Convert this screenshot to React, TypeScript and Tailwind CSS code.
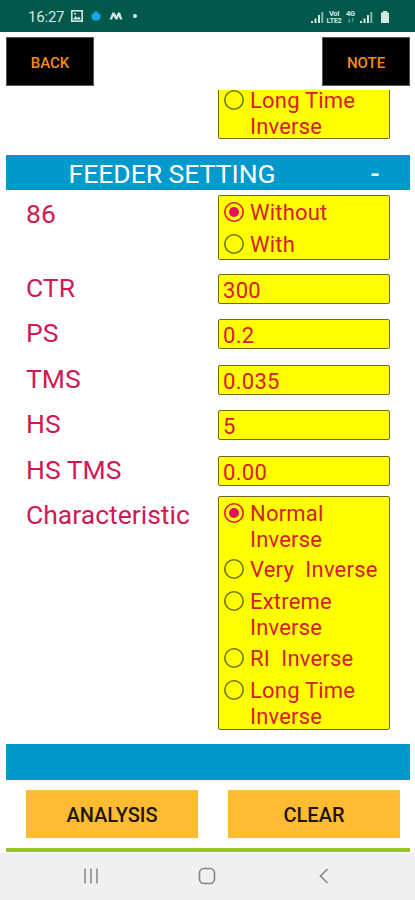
type Option = { lines: string[]; checked?: boolean };

const fields = [
  { label: "CTR", value: "300" },
  { label: "PS", value: "0.2" },
  { label: "TMS", value: "0.035" },
  { label: "HS", value: "5" },
  { label: "HS TMS", value: "0.00" },
];

const characteristics: Option[] = [
  { lines: ["Normal", "Inverse"], checked: true },
  { lines: ["Very  Inverse"] },
  { lines: ["Extreme", "Inverse"] },
  { lines: ["RI  Inverse"] },
  { lines: ["Long Time", "Inverse"] },
];

function Radio({ checked }: { checked?: boolean }) {
  const color = checked ? "#e0183c" : "#6f7600";
  return (
    <svg width="22" height="22" viewBox="0 0 22 22" className="mt-1 shrink-0">
      <circle cx="11" cy="11" r="9.2" fill="none" stroke={color} strokeWidth="1.6" />
      {checked && <circle cx="11" cy="11" r="5" fill="#e0105a" />}
    </svg>
  );
}

function RadioRow({ lines, checked }: Option) {
  return (
    <div className={`flex gap-[5px] pl-1 ${lines.length > 1 ? "h-[56.3px]" : "h-[32.2px]"}`}>
      <Radio checked={checked} />
      <div className="pt-[3px] text-[22px] leading-[26px] tracking-[0.2px] whitespace-pre text-[#d3202c]">
        {lines.map((line) => (
          <div key={line}>{line}</div>
        ))}
      </div>
    </div>
  );
}

function Label({ children }: { children: string }) {
  return (
    <div className="w-48 shrink-0 text-[26.5px] leading-[28px] whitespace-pre text-[#cf1a56]">{children}</div>
  );
}

// Barra de estado de Android
function StatusBar() {
  return (
    <div className="flex h-8 shrink-0 items-center bg-[#00584b] pl-7 text-[#d5e5e2]">
      <span className="w-[43px] pt-px text-[15px] leading-8 tracking-[-0.2px]">16:27</span>
      <svg width="12" height="12" viewBox="0 0 12 12">
        <rect x="0.8" y="0.8" width="10.4" height="10.4" fill="none" stroke="#d5e5e2" strokeWidth="1.6" />
        <path d="M2 9.5 4.5 6l2 2L8 6.5l2 3zM3 3h2v1.5H3z" fill="#d5e5e2" />
      </svg>
      <svg width="10" height="12" viewBox="0 0 10 12" className="ml-2">
        <path d="M3.5 1.5h3l.5 1.5 2.5 1.5v3.5L7.5 10.5h-5L.5 8V4.5L3 3z" fill="#16a5e8" />
      </svg>
      <svg width="14" height="10" viewBox="0 0 14 10" className="ml-2">
        <path d="M3.5 1.5h2l2 3.5 1.5-3.5h2l2.5 7h-2.5L9.8 5 8.5 8.5H6.5L4.5 5 3 8.5H.5z" fill="#d5e5e2" />
      </svg>
      <span className="ml-[10px] size-1 rounded-full bg-[#e5f0ee]" />
      <div className="mr-[25px] ml-auto flex items-center pt-px">
        <Signal />
        <span className="ml-0.5 flex w-4 flex-col items-center text-[7.5px] leading-[7px] font-bold tracking-[-0.4px]">
          <span>VoI</span>
          <span>LTE2</span>
        </span>
        <span className="ml-[3px] flex w-[11px] flex-col items-center text-[7.5px] leading-[7px] font-bold tracking-[-0.3px]">
          <span>4G</span>
          <svg width="8" height="7" viewBox="0 0 8 8" fill="none" stroke="currentColor" strokeWidth="0.8" opacity="0.7">
            <path d="M2 1.5v4.5M.8 4.8 2 6l1.2-1.2M6 6V1.5M4.8 2.7 6 1.5l1.2 1.2" />
          </svg>
        </span>
        <div className="ml-1">
          <Signal />
        </div>
        <svg width="10" height="12" viewBox="0 0 10 12" className="ml-[7px]">
          <path d="M3 0h4v1.5h2V12H1V1.5h2z" fill="#d5e5e2" />
        </svg>
      </div>
    </div>
  );
}

function Signal() {
  return (
    <svg width="13" height="12" viewBox="0 0 13 12" fill="#d5e5e2" className="block">
      <path d="M0 10h2v2H0zM3.5 7.5h2V12h-2zM7 4h2v8H7z" />
      <path d="M10.3 1h2v11h-2z" opacity="0.65" />
    </svg>
  );
}

export default function App() {
  return (
    <div className="flex h-[900px] w-[415px] flex-col overflow-hidden bg-white font-['Roboto',sans-serif]">
      <StatusBar />

      <div className="mt-[5px] flex h-[49px] shrink-0 justify-between pr-[5px] pl-1.5 text-[15px] font-medium text-[#f58c18]">
        <button className="w-[88px] border border-[#555] bg-black pt-[3px]">BACK</button>
        <button className="w-[88px] border border-[#555] bg-black pt-[3px]">NOTE</button>
      </div>

      {/* Final de la lista anterior, cortada por el scroll */}
      <div className="mt-1 ml-[218px] flex h-[49px] w-[172px] shrink-0 flex-col justify-end overflow-hidden rounded-b-xs border border-t-0 border-[#6b6b20] bg-[#ffff00]">
        <div className="-mb-[3px]">
          <RadioRow lines={["Long Time", "Inverse"]} />
        </div>
      </div>

      <div className="mt-4 mr-[5px] ml-1.5 flex h-[35px] shrink-0 items-center bg-[#0099cc] pt-[3px] text-[26.5px] text-white">
        <span className="w-[333px] text-center">FEEDER SETTING</span>
        <span className="w-[72px] pl-0.5 text-center font-medium">-</span>
      </div>

      <div className="flex flex-col pt-[5px] pl-[26px]">
        <div className="flex h-[79px]">
          <div className="pt-[5px]">
            <Label>86</Label>
          </div>
          <div className="h-[65px] w-[172px] rounded-xs border border-[#6b6b20] bg-[#ffff00] pt-px">
            <RadioRow lines={["Without"]} checked />
            <RadioRow lines={["With"]} />
          </div>
        </div>

        {fields.map((field) => (
          <div key={field.label} className="flex h-[45.4px]">
            <Label>{field.label}</Label>
            <div className="h-[30px] w-[172px] rounded-xs border border-[#6b6b20] bg-[#ffff00] pl-1 text-[22px] leading-[31px] tracking-[0.3px] text-[#d3202c]">
              {field.value}
            </div>
          </div>
        ))}

        <div className="-mt-[5px] flex h-[234px]">
          <div className="pt-[5px]">
            <Label>Characteristic</Label>
          </div>
          <div className="w-[172px] rounded-xs border border-[#6b6b20] bg-[#ffff00] pt-px">
            {characteristics.map((option) => (
              <RadioRow key={option.lines[0]} {...option} />
            ))}
          </div>
        </div>
      </div>

      <div className="mt-[14px] mr-[5px] ml-1.5 h-9 shrink-0 bg-[#0099cc]" />

      <div className="mt-[10px] flex h-12 shrink-0 gap-[30px] pl-[26px] text-[20px] font-medium text-[#1c1608]">
        <button className="w-[172px] bg-[#ffbb33] pt-[3px]">ANALYSIS</button>
        <button className="w-[172px] bg-[#ffbb33] pt-[3px]">CLEAR</button>
      </div>

      <div className="mt-[10px] mr-[5px] ml-1.5 h-1 shrink-0 bg-[#99c51f]" />

      <div className="mt-px flex grow bg-[#f0f0f0] pt-[13px] pl-[82px] text-[#858585]">
        <svg width="18" height="20" viewBox="0 0 18 20" fill="none" stroke="currentColor" strokeWidth="1.5">
          <path d="M3 2.5v15M9 2.5v15M15 2.5v15" />
        </svg>
        <svg width="18" height="20" viewBox="0 0 18 20" fill="none" stroke="currentColor" strokeWidth="1.6" className="ml-[98px]">
          <rect x="1.5" y="2.5" width="15" height="15" rx="4.5" />
        </svg>
        <svg width="12" height="20" viewBox="0 0 12 20" fill="none" stroke="currentColor" strokeWidth="1.6" className="ml-[102px]">
          <path d="M9.5 3 2.5 10l7 7" />
        </svg>
      </div>
    </div>
  );
}
